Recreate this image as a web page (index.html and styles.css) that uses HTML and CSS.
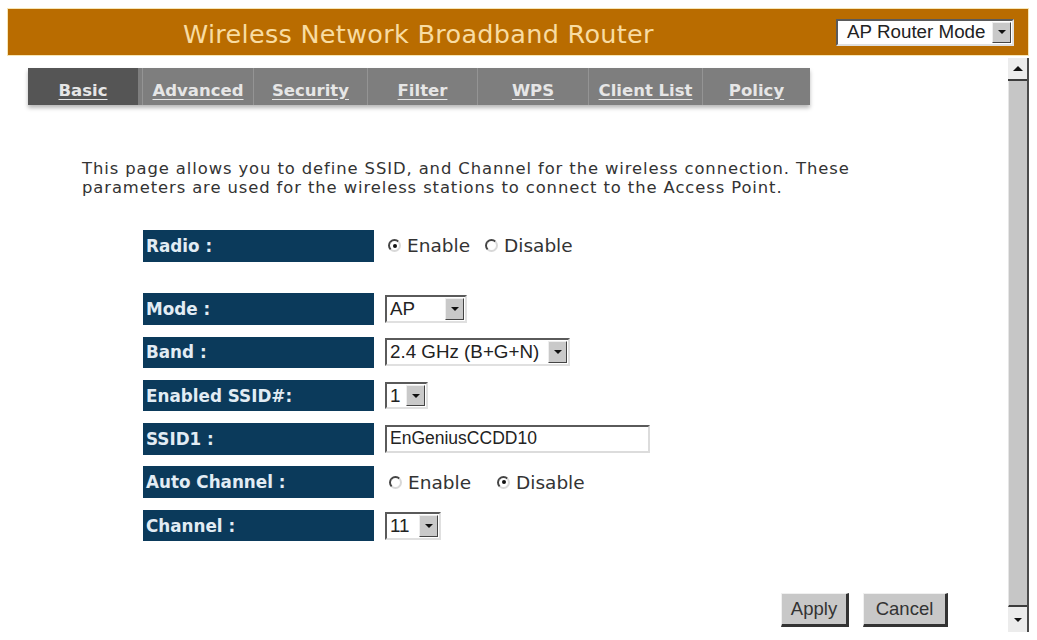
FILE: index.html
```html
<!DOCTYPE html>
<html>
<head>
<meta charset="utf-8">
<link rel="stylesheet" href="styles.css">
</head>
<body>
<div class="frame">
  <header class="topbar">
    <div class="title">Wireless Network Broadband Router</div>
    <div class="select sel-mode">
      <span class="sel-text">AP Router Mode</span>
      <span class="sel-btn"><span class="tri-down"></span></span>
    </div>
  </header>
  <div class="main">
    <div class="content">
      <nav class="tabs">
        <a class="tab active t-basic">Basic</a>
        <a class="tab t-adv">Advanced</a>
        <a class="tab t-sec">Security</a>
        <a class="tab t-filter">Filter</a>
        <a class="tab t-wps">WPS</a>
        <a class="tab t-client">Client List</a>
        <a class="tab t-policy">Policy</a>
      </nav>
      <p class="desc">This page allows you to define SSID, and Channel for the wireless connection. These<br>parameters are used for the wireless stations to connect to the Access Point.</p>
      <div class="form">
        <div class="row row-radio">
          <div class="label">Radio :</div>
          <div class="value">
            <span class="radio checked"></span><span class="rtext">Enable</span>
            <span class="radio r-gap1"></span><span class="rtext">Disable</span>
          </div>
        </div>
        <div class="row row-first">
          <div class="label">Mode :</div>
          <div class="value">
            <div class="select sel-ap"><span class="sel-text">AP</span><span class="sel-btn"><span class="tri-down"></span></span></div>
          </div>
        </div>
        <div class="row">
          <div class="label">Band :</div>
          <div class="value">
            <div class="select sel-band"><span class="sel-text">2.4 GHz (B+G+N)</span><span class="sel-btn"><span class="tri-down"></span></span></div>
          </div>
        </div>
        <div class="row">
          <div class="label">Enabled SSID#:</div>
          <div class="value">
            <div class="select sel-num"><span class="sel-text">1</span><span class="sel-btn"><span class="tri-down"></span></span></div>
          </div>
        </div>
        <div class="row">
          <div class="label">SSID1 :</div>
          <div class="value">
            <div class="textbox">EnGeniusCCDD10</div>
          </div>
        </div>
        <div class="row">
          <div class="label">Auto Channel :</div>
          <div class="value">
            <span class="radio r-auto"></span><span class="rtext">Enable</span>
            <span class="radio checked r-gap2"></span><span class="rtext">Disable</span>
          </div>
        </div>
        <div class="row">
          <div class="label">Channel :</div>
          <div class="value">
            <div class="select sel-ch"><span class="sel-text">11</span><span class="sel-btn"><span class="tri-down"></span></span></div>
          </div>
        </div>
      </div>
      <div class="actions">
        <button class="btn btn-apply">Apply</button>
        <button class="btn btn-cancel">Cancel</button>
      </div>
    </div>
    <div class="scrollbar">
      <div class="sb-btn sb-up"><span class="tri-up"></span></div>
      <div class="sb-thumb"></div>
      <div class="sb-btn sb-down"><span class="tri-down"></span></div>
    </div>
  </div>
</div>
</body>
</html>
```
FILE: styles.css
```css
html, body {
  margin: 0;
  padding: 0;
  background: #ffffff;
}
.frame {
  padding: 8px 0 0 7px;
  width: 1022px;
  font-family: "DejaVu Sans", Verdana, sans-serif;
}
.topbar {
  height: 46px;
  background: #b96c00;
  border: 1px solid #f7e6b5;
  display: flex;
  align-items: center;
  position: relative;
}
.title {
  margin-left: 175px;
  margin-top: 3px;
  color: #f8dca2;
  font-size: 25.5px;
  letter-spacing: 0.3px;
}
.select {
  display: flex;
  align-items: stretch;
  background: #ffffff;
  border-style: solid;
  border-width: 2px;
  border-color: #5a5a5a #e0e0e0 #e0e0e0 #5a5a5a;
  box-sizing: border-box;
  font-family: "Liberation Sans", Arial, sans-serif;
  color: #222;
}
.sel-text {
  flex: 1;
  display: flex;
  align-items: center;
  padding-left: 3px;
  font-size: 18.8px;
  white-space: nowrap;
}
.sel-btn {
  width: 17px;
  margin: 1px;
  background: #c9c9c9;
  border-style: solid;
  border-width: 1px;
  border-color: #eeeeee #444 #444 #eeeeee;
  display: flex;
  align-items: center;
  justify-content: center;
}
.tri-down {
  width: 0;
  height: 0;
  border-left: 4px solid transparent;
  border-right: 4px solid transparent;
  border-top: 4px solid #111;
}
.tri-up {
  width: 0;
  height: 0;
  border-left: 5px solid transparent;
  border-right: 5px solid transparent;
  border-bottom: 5px solid #111;
}
.sel-mode {
  margin-left: auto;
  margin-right: 14px;
  width: 178px;
  height: 27px;
}
.sel-mode .sel-text {
  padding-left: 9px;
}
.main {
  display: flex;
  height: 574px;
  margin-top: 2px;
}
.content {
  flex: 1;
  position: relative;
}
.tabs {
  display: flex;
  margin: 10px 0 0 21px;
  width: 782px;
  height: 37px;
  background: #7e7e7e;
  box-shadow: 0 3px 4px rgba(0,0,0,0.28);
}
.tab {
  display: flex;
  align-items: center;
  justify-content: center;
  padding-top: 7px;
  color: #e6e6e6;
  font-weight: bold;
  font-size: 16.5px;
  text-decoration: underline;
  text-underline-offset: 3px;
  border-left: 1px solid #949494;
  box-sizing: border-box;
}
.tab.active {
  background: #555555;
  border-left: none;
}
.t-basic { width: 110px; }
.t-adv { width: 111px; margin-left: 4px; }
.t-sec { width: 114px; }
.t-filter { width: 110px; }
.t-wps { width: 111px; }
.t-client { width: 114px; }
.t-policy { width: 108px; }
.desc {
  margin: 54px 0 0 75px;
  font-size: 16.4px;
  letter-spacing: 0.9px;
  line-height: 19px;
  color: #333333;
}
.form {
  margin: 33px 0 0 136px;
  display: flex;
  flex-direction: column;
  gap: 11.8px;
}
.row {
  display: flex;
  height: 31.5px;
}
.row-first {
  margin-top: 20px;
}
.label {
  width: 231px;
  background: #0b3a5b;
  color: #e2ecf4;
  font-weight: bold;
  font-size: 16.8px;
  display: flex;
  align-items: center;
  padding-left: 3px;
  box-sizing: border-box;
}
.value {
  display: flex;
  align-items: center;
  margin-left: 11px;
}
.radio {
  width: 9px;
  height: 9px;
  border-radius: 50%;
  border-style: solid;
  border-width: 2px;
  border-color: #444 #d8d8d8 #d8d8d8 #444;
  position: relative;
  margin-left: 3px;
  margin-right: 6px;
}
.radio.checked::after {
  content: "";
  position: absolute;
  left: 2.5px;
  top: 2.5px;
  width: 4px;
  height: 4px;
  border-radius: 50%;
  background: #111;
}
.rtext {
  font-size: 18.5px;
  color: #333;
}
.r-gap1 { margin-left: 15px; }
.r-auto { margin-left: 4px; margin-right: 6px; }
.r-gap2 { margin-left: 26px; margin-right: 6px; }
.sel-ap { width: 82px; height: 28px; }
.sel-band { width: 185px; height: 28px; }
.sel-num { width: 43px; height: 27px; }
.sel-ch { width: 56px; height: 28px; }
.textbox {
  width: 265px;
  height: 28px;
  box-sizing: border-box;
  border-style: solid;
  border-width: 2px;
  border-color: #5a5a5a #dcdcdc #dcdcdc #5a5a5a;
  font-family: "Liberation Sans", Arial, sans-serif;
  font-size: 17.5px;
  color: #222;
  display: flex;
  align-items: center;
  padding-left: 3px;
}
.actions {
  position: absolute;
  left: 774px;
  top: 535px;
  display: flex;
  gap: 14px;
}
.btn {
  height: 34px;
  background: #c8c8c8;
  border-style: solid;
  border-width: 1px 3px 3px 1px;
  border-color: #f0f0f0 #333 #333 #f0f0f0;
  font-family: "Liberation Sans", Arial, sans-serif;
  font-size: 18.5px;
  color: #333;
  padding: 0;
}
.btn-apply { width: 68px; }
.btn-cancel { width: 85px; }
.scrollbar {
  width: 21px;
  display: flex;
  flex-direction: column;
  border-right: 2px solid #4a4a4a;
  box-sizing: border-box;
  background: #eeeeee;
}
.sb-btn {
  display: flex;
  align-items: center;
  justify-content: center;
  background: #ececec;
}
.sb-up {
  height: 21px;
  border-bottom: 2px solid #3c3c3c;
}
.sb-thumb {
  flex: 1;
  background: #c6c6c6;
  border-bottom: 2px solid #3c3c3c;
  border-left: 1px solid #e6e6e6;
}
.sb-down {
  height: 25px;
}
```
